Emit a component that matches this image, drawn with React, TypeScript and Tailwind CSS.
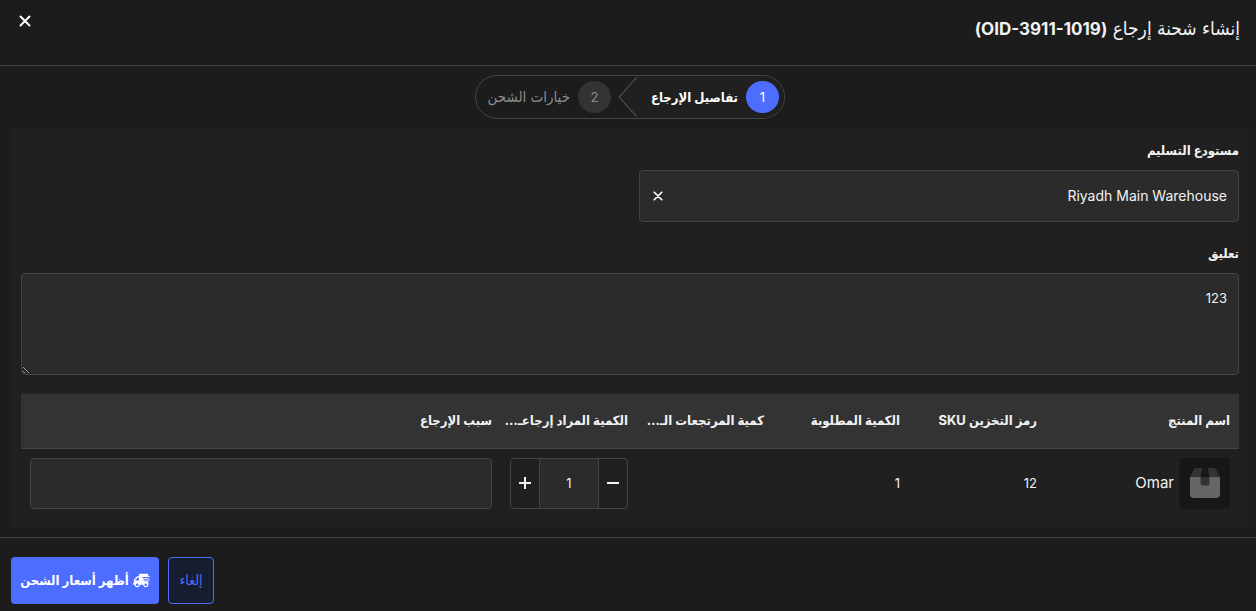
import { useState } from 'react';
import type { ReactNode } from 'react';
import { FaShippingFast } from 'react-icons/fa';

function CloseIcon({ small }: { small?: boolean }) {
  return (
    <svg viewBox="0 0 12 12" className={small ? 'size-2.5' : 'size-3'} fill="none" stroke="currentColor" strokeWidth="2" strokeLinecap="round" aria-hidden="true">
      <path d="M1.5 1.5 10.5 10.5M10.5 1.5 1.5 10.5" />
    </svg>
  );
}

function BoxIcon() {
  return (
    <svg viewBox="0 0 32 32" className="size-8" aria-hidden="true">
      <path d="M7 1H25Q26.500 1 27.200 2.500L31 10H1L4.800 2.500Q5.500 1 7 1Z" fill="#333333" />
      <path d="M1 10H31V27Q31 31 27 31H5Q1 31 1 27Z" fill="#666666" />
      <path d="M13.500 1H18.500L20.500 10H11.500Z" fill="#171717" />
      <path d="M11.500 10H20.500V16.500Q20.500 18.500 18.500 18.500H13.500Q11.500 18.500 11.500 16.500Z" fill="#333333" />
    </svg>
  );
}

function StepNumber({ active, children }: { active?: boolean; children: ReactNode }) {
  return (
    <span
      className={
        active
          ? 'flex h-8 w-[33px] shrink-0 items-center justify-center rounded-full bg-[#4d6dff] text-[13px] font-normal text-white'
          : 'flex h-8 w-[33px] shrink-0 items-center justify-center rounded-full bg-[#333333] text-[13px] text-[#8c8c8c]'
      }
    >
      {children}
    </span>
  );
}

function Stepper() {
  return (
    <ol className="mx-auto flex h-11 w-fit items-stretch overflow-hidden rounded-full border border-[#444444]">
      <li className="flex w-[147px] items-center gap-2 bg-[#202020] ps-[5px] text-[13px] font-bold whitespace-nowrap text-white" aria-current="step">
        <StepNumber active>1</StepNumber>
        تفاصيل الإرجاع
      </li>
      <li className="flex items-center">
        <svg viewBox="0 0 19 42" className="h-[42px] w-[19px]" aria-hidden="true">
          <path d="M19 0 1 21 19 42Z" fill="#202020" />
          <path d="M19 1 1 21 19 41" fill="none" stroke="#4a4a4a" strokeWidth="1.200" />
        </svg>
      </li>
      <li className="flex w-[142px] items-center gap-2 ps-[7px] text-[15px] whitespace-nowrap text-[#8c8c8c]">
        <StepNumber>2</StepNumber>
        خيارات الشحن
      </li>
    </ol>
  );
}

const headings = [
  'اسم المنتج',
  'رمز التخزين SKU',
  'الكمية المطلوبة',
  'كمية المرتجعات الـ…',
  'الكمية المراد إرجاعـ…',
  'سبب الإرجاع',
];

export default function App() {
  const [warehouse, setWarehouse] = useState('Riyadh Main Warehouse');
  const [comment, setComment] = useState('123');
  const [quantity, setQuantity] = useState(1);
  const [reason, setReason] = useState('');

  return (
    <div dir="rtl" className="min-h-screen bg-[#1c1c1c] font-['Inter','DejaVu_Sans_Condensed','DejaVu_Sans',sans-serif] text-sm text-[#f2f2f2]">
      <header className="flex h-[66px] items-start justify-between border-b border-[#444444] ps-4 pe-[19px] pt-[15px]">
        <h1 className="text-[19px] leading-7">
          إنشاء شحنة إرجاع <bdi className="text-[17px] font-bold" dir="ltr">(OID-3911-1019)</bdi>
        </h1>
        <button type="button" aria-label="إغلاق" className="text-white">
          <CloseIcon />
        </button>
      </header>

      <main className="pt-[9px] pb-[9px] ps-[7px] pe-[11px]">
        <Stepper />

        <section className="mt-[9px] bg-[#202020] p-2.5">
          <label htmlFor="warehouse" className="mb-2 block text-[13px] leading-6 font-bold">
            مستودع التسليم
          </label>
          <div className="flex h-[52px] w-[600px] max-w-full items-center rounded border border-[#444444] bg-[#2b2b2b] ps-[11px] pe-3">
            <input
              id="warehouse"
              value={warehouse}
              onChange={(event) => setWarehouse(event.target.value)}
              className="min-w-0 flex-1 bg-transparent text-sm outline-none"
            />
            <button type="button" aria-label="مسح" onClick={() => setWarehouse('')} className="flex size-3 items-center justify-center text-white">
              <CloseIcon small />
            </button>
          </div>

          <label htmlFor="comment" className="mt-[19px] mb-2 block text-[13px] leading-6 font-bold">
            تعليق
          </label>
          <textarea
            id="comment"
            value={comment}
            onChange={(event) => setComment(event.target.value)}
            className="block h-[102px] w-full rounded border border-[#444444] bg-[#2b2b2b] px-[11px] py-3 text-[13px] leading-6 outline-none"
          />

          <table className="mt-[19px] w-full table-fixed border-collapse">
            <colgroup>
              <col className="w-[193px]" />
              <col className="w-[137px]" />
              <col className="w-[136px]" />
              <col className="w-[136px]" />
              <col className="w-[136px]" />
              <col />
            </colgroup>
            <thead>
              <tr className="h-[54px] border-b border-[#444444] bg-[#333333]">
                {headings.map((heading) => (
                  <th key={heading} scope="col" className="px-[9px] text-start text-[13px] font-bold whitespace-nowrap">
                    {heading}
                  </th>
                ))}
              </tr>
            </thead>
            <tbody>
              <tr>
                <td className="p-[9px]">
                  <div className="flex items-center gap-[5px]">
                    <span className="flex size-[51px] items-center justify-center rounded bg-[#171717]">
                      <BoxIcon />
                    </span>
                    <span className="text-[15px]">Omar</span>
                  </div>
                </td>
                <td className="p-[9px] text-[13px]">12</td>
                <td className="p-[9px] text-[13px]">1</td>
                <td className="p-[9px]" />
                <td className="p-[9px]">
                  <div className="flex h-[51px] overflow-hidden rounded border border-[#444444]">
                    <button
                      type="button"
                      aria-label="إنقاص الكمية"
                      onClick={() => setQuantity(Math.max(0, quantity - 1))}
                      className="flex w-7 items-center justify-center"
                    >
                      <svg viewBox="0 0 12 12" className="size-3" stroke="currentColor" strokeWidth="2" aria-hidden="true">
                        <path d="M0 6H12" />
                      </svg>
                    </button>
                    <input
                      aria-label="الكمية المراد إرجاعها"
                      inputMode="numeric"
                      value={quantity}
                      onChange={(event) => setQuantity(Number(event.target.value) || 0)}
                      className="min-w-0 flex-1 border-x border-[#444444] bg-[#2b2b2b] text-center text-[13px] outline-none"
                    />
                    <button
                      type="button"
                      aria-label="زيادة الكمية"
                      onClick={() => setQuantity(quantity + 1)}
                      className="flex w-7 items-center justify-center"
                    >
                      <svg viewBox="0 0 12 12" className="size-3" stroke="currentColor" strokeWidth="2" aria-hidden="true">
                        <path d="M0 6H12M6 0V12" />
                      </svg>
                    </button>
                  </div>
                </td>
                <td className="p-[9px]">
                  <input
                    aria-label="سبب الإرجاع"
                    value={reason}
                    onChange={(event) => setReason(event.target.value)}
                    className="block h-[51px] w-full rounded border border-[#444444] bg-[#2b2b2b] px-[11px] outline-none"
                  />
                </td>
              </tr>
            </tbody>
          </table>
        </section>
      </main>

      <footer className="flex justify-end gap-[9px] border-t border-[#444444] pt-[19px] pe-[11px] pb-[7px]">
        <button type="button" className="h-[47px] w-[46px] rounded border border-[#4d6dff] bg-[#151d2f] text-sm text-[#4d6dff]">
          إلغاء
        </button>
        <button type="button" className="flex h-[47px] w-[148px] items-center justify-center gap-1 rounded bg-[#4d6dff] text-[13px] font-bold whitespace-nowrap text-white">
          <FaShippingFast className="size-[17px] -scale-x-100" aria-hidden="true" />
          أظهر أسعار الشحن
        </button>
      </footer>
    </div>
  );
}
